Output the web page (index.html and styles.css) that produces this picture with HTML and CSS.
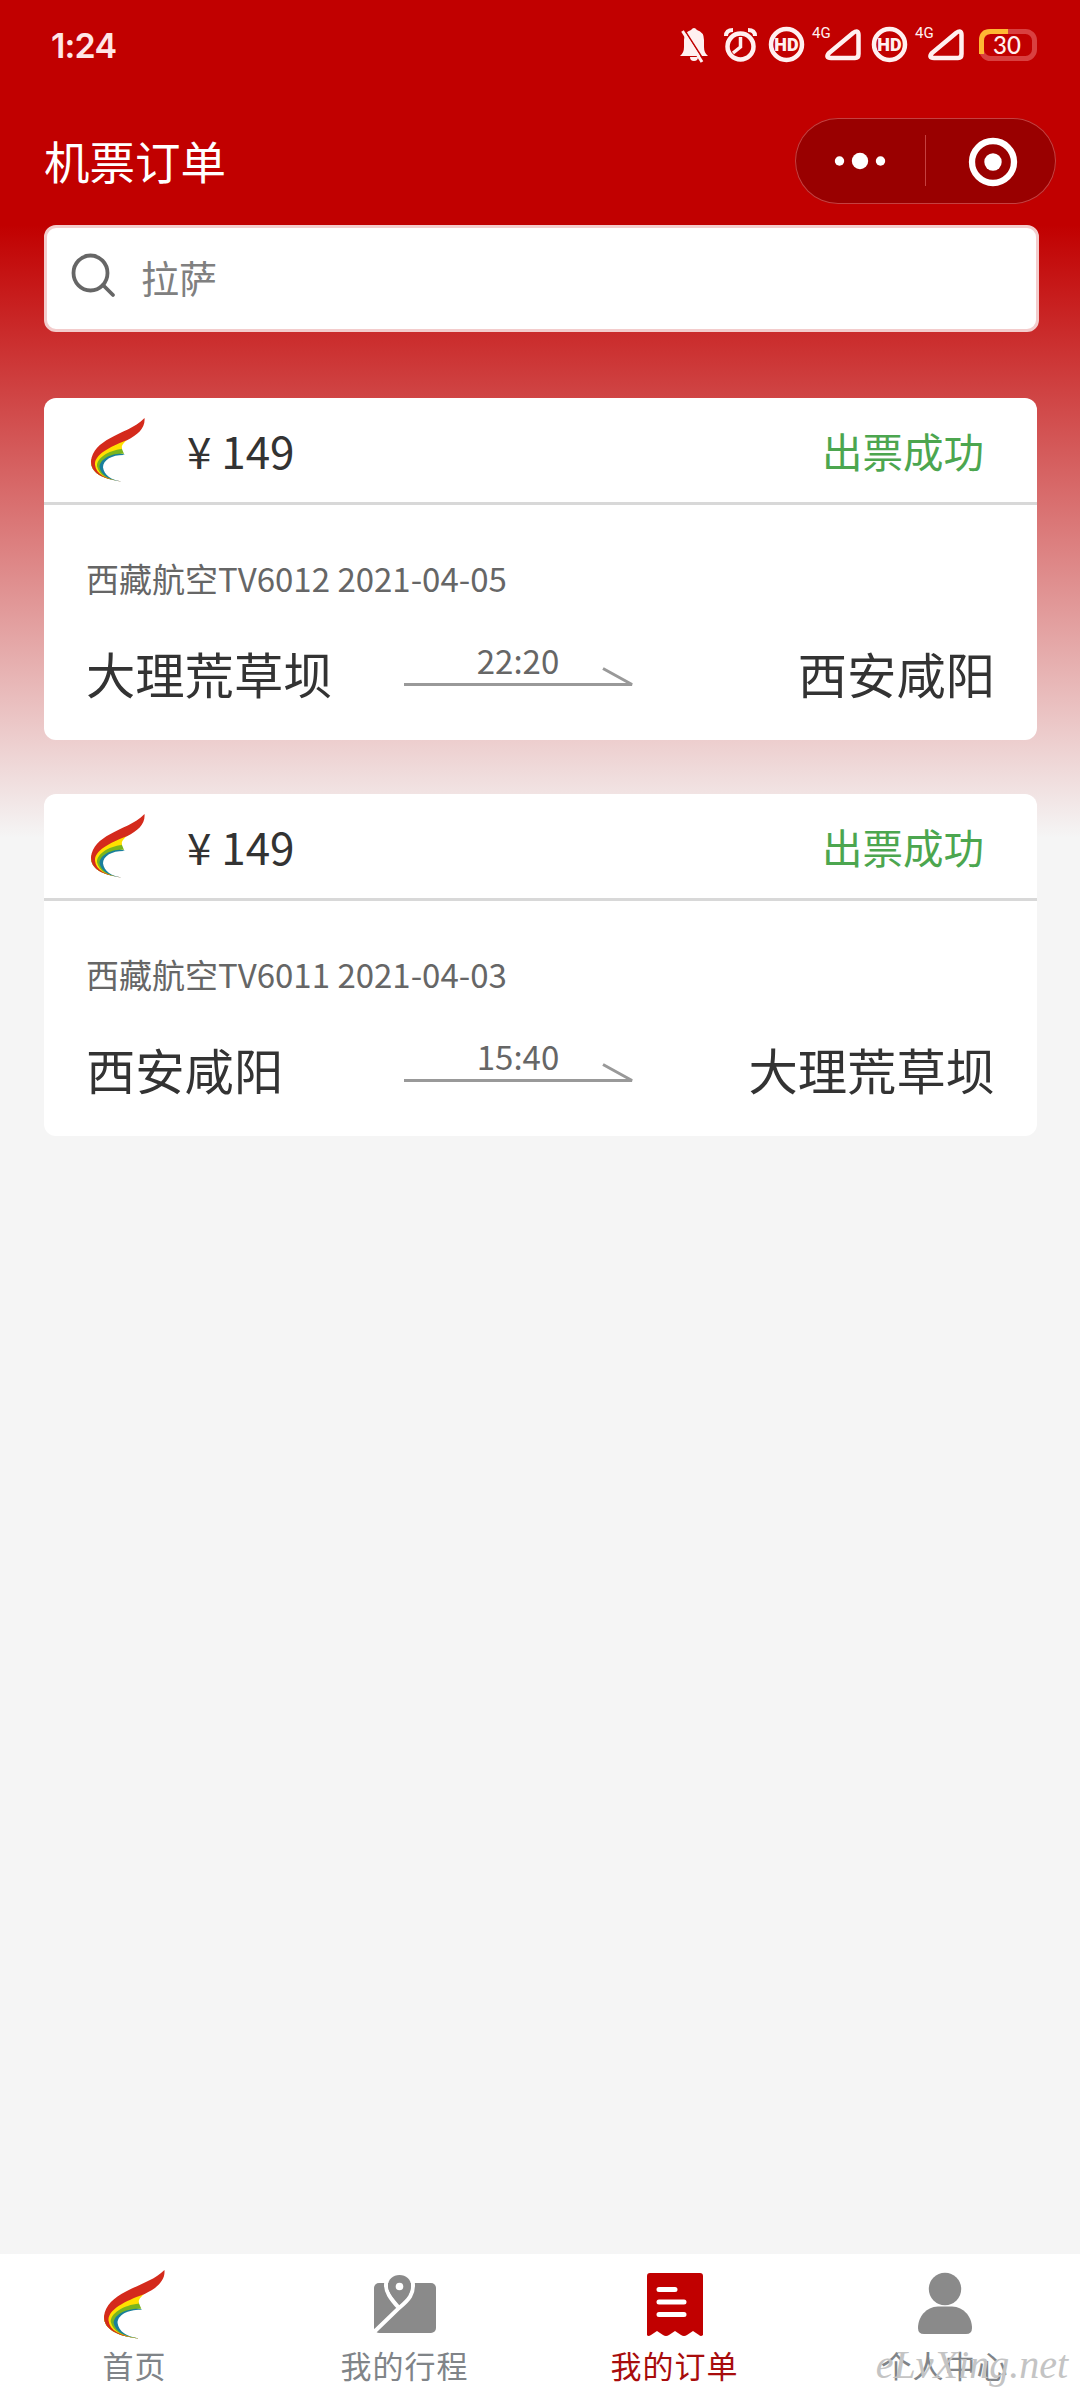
FILE: index.html
```html
<!DOCTYPE html>
<html lang="zh-CN">
<head>
  <meta charset="UTF-8">
  <meta name="viewport" content="width=device-width, initial-scale=1.0">
  <title>机票订单</title>
  <link rel="stylesheet" href="styles.css">
</head>
<body>
  <!-- shared airline logo -->
  <svg class="defs" width="0" height="0">
    <symbol id="logo" viewBox="0 0 54 65" preserveAspectRatio="none">
      <path fill="#187f9c" d="M34 37.500C22 37 12 42 12 50C13 58 20 63 31 64.500C10 62 0 55 0 44C3 38 20 31 34 37.500Z"/>
      <path fill="#7ab51d" d="M30 29L33 36.500C20 35.500 8.500 42 8.500 50C10 58 18 63 31 64.500C10 62 0 55 0 44C2 36 16 29 30 29Z"/>
      <path fill="#ffe000" d="M38 20C32 26 30 28 31 31.500C17 33 5.500 41 6 49C8 58 16 62.500 31 64.500C10 62 0 55 0 44C4 32 22 24 38 20Z"/>
      <path fill="#d42a1c" d="M53.500 0C54.500 10 47 17 36 22.500C24 27 3 36 4 47.500C5 57 14 62 31 64.500C10 62 0 55 0 44C1 33 9 26 19 20.500C30 14 44 10 53.500 0Z"/>
    </symbol>
  </svg>

  <div class="page">
    <header class="top">
      <div class="status-bar">
        <span class="clock">1:24</span>
        <svg class="status-icons" width="362" height="40" viewBox="0 0 362 40">
          <path d="M0 31Q4 28 4 22V15Q4 7 11 5Q14 1 17 5Q24 7 24 15V22Q24 28 28 31ZM10 32H18Q18 36 14 36Q10 36 10 32Z" fill="#fff0f0"/>
          <path d="M4.500 5L25 37" stroke="#c10000" stroke-width="1.500"/>
          <path d="M2.500 6L22 37" stroke="#fff0f0" stroke-width="3"/>
          <g fill="none" stroke="#fff0f0" stroke-width="4.500">
            <circle cx="60.500" cy="21.500" r="13"/>
            <path d="M60.500 12V22L53 28" stroke-width="3.500"/>
            <path d="M46 11Q46 5 53 5M68 5Q75 5 75 11" stroke-width="4"/>
            <circle cx="106.500" cy="19.500" r="15.500"/>
            <path d="M178.500 10Q178.500 4 173 8L149 28Q145 33 151 33H175Q178.500 33 178.500 29Z"/>
            <circle cx="209.500" cy="19.500" r="15.500"/>
            <path d="M281.500 10Q281.500 4 276 8L252 28Q248 33 254 33H278Q281.500 33 281.500 29Z"/>
          </g>
          <g class="hd"><text x="106.500" y="26">HD</text><text x="209.500" y="26">HD</text></g>
          <g class="net"><text x="132" y="13">4G</text><text x="235" y="13">4G</text></g>
          <rect x="301.500" y="6.500" width="53" height="27" rx="9" fill="none" stroke="#d94040" stroke-width="5"/>
          <path d="M328 6.500H310.500Q301.500 6.500 301.500 15.500V29" fill="none" stroke="#ffb833" stroke-width="5"/>
          <text class="battery" x="327" y="29">30</text>
        </svg>
      </div>
      <div class="nav-bar">
        <h1>机票订单</h1>
        <div class="capsule">
          <svg width="261" height="86" viewBox="0 0 261 86">
            <g fill="#fff">
              <circle cx="44.500" cy="43" r="4.700"/>
              <circle cx="65" cy="43" r="8.200"/>
              <circle cx="85.500" cy="43" r="4.700"/>
              <circle cx="198" cy="44" r="8.700"/>
            </g>
            <circle cx="198" cy="44" r="21" fill="none" stroke="#fff" stroke-width="6.300"/>
            <path d="M130.500 17V68" stroke="#c54040"/>
          </svg>
        </div>
      </div>
    </header>

    <main class="content">
      <div class="search">
        <svg width="46" height="46" viewBox="0 0 46 46" fill="none" stroke="#666" stroke-width="3.800" stroke-linecap="round">
          <ellipse cx="20.500" cy="20" rx="17" ry="17.500"/>
          <path d="M33 32L43 42"/>
        </svg>
        <span>拉萨</span>
      </div>

      <div class="card">
        <div class="card-head">
          <svg class="logo" width="54" height="64"><use href="#logo"/></svg>
          <span class="price">¥ 149</span>
          <span class="state">出票成功</span>
        </div>
        <div class="card-body">
          <div class="flight">西藏航空TV6012 2021-04-05</div>
          <div class="route">
            <span class="city">大理荒草坝</span>
            <div class="arrow">
              <span>22:20</span>
              <svg width="229" height="20" viewBox="0 0 229 20"><path d="M0 17.500H228L199 1.500" fill="none" stroke="#999" stroke-width="3" stroke-linejoin="bevel"/></svg>
            </div>
            <span class="city">西安咸阳</span>
          </div>
        </div>
      </div>

      <div class="card">
        <div class="card-head">
          <svg class="logo" width="54" height="64"><use href="#logo"/></svg>
          <span class="price">¥ 149</span>
          <span class="state">出票成功</span>
        </div>
        <div class="card-body">
          <div class="flight">西藏航空TV6011 2021-04-03</div>
          <div class="route">
            <span class="city">西安咸阳</span>
            <div class="arrow">
              <span>15:40</span>
              <svg width="229" height="20" viewBox="0 0 229 20"><path d="M0 17.500H228L199 1.500" fill="none" stroke="#999" stroke-width="3" stroke-linejoin="bevel"/></svg>
            </div>
            <span class="city">大理荒草坝</span>
          </div>
        </div>
      </div>
    </main>

    <nav class="tab-bar">
      <div class="tab">
        <svg width="61" height="69"><use href="#logo"/></svg>
        <span>首页</span>
      </div>
      <div class="tab">
        <svg width="62" height="69" viewBox="0 0 62 69">
          <rect y="13" width="62" height="50" rx="5" fill="#8a8a8a"/>
          <path d="M-1 63L25 38C16 28 12 22 12 15C12 7 18 2 25.500 2C33 2 39 7 39 15C39 24 36 29 25 38" fill="#8a8a8a" stroke="#fff" stroke-width="4"/>
          <rect x="8" width="35" height="13" fill="#fff"/>
          <path d="M25.500 34C18 27 14 21 14 16C14 9 19 5 25.500 5C32 5 37 9 37 16C37 22 33 27 25.500 34Z" fill="#8a8a8a"/>
          <circle cx="25.500" cy="16.500" r="3.800" fill="#fff"/>
        </svg>
        <span>我的行程</span>
      </div>
      <div class="tab active">
        <svg width="56" height="69" viewBox="0 0 56 69">
          <path d="M3 3H53Q56 3 56 6V65Q54 67 52 65L46 61L40 65Q37 67 34 65L28 61L22 65Q19 67 16 65L10 61L4 65Q1 67 0 65V6Q0 3 3 3Z" fill="#c10000"/>
          <path d="M12 19.500H28M12 32H37M12 44.500H37" stroke="#fff" stroke-width="5" stroke-linecap="round"/>
        </svg>
        <span>我的订单</span>
      </div>
      <div class="tab">
        <svg width="54" height="69" viewBox="0 0 54 69" fill="#8a8a8a">
          <circle cx="27" cy="19" r="16.200"/>
          <path d="M20 36.500H34C46 37 54 47 54 58Q54 64 48 64H6Q0 64 0 58C0 47 8 37 20 36.500Z"/>
        </svg>
        <span>个人中心</span>
      </div>
      <div class="watermark">eLvXing.net</div>
    </nav>
  </div>
</body>
</html>
```
FILE: styles.css
```css
* {
  box-sizing: border-box;
}
body {
  margin: 0;
  background: #f5f5f5;
  font-family: "Noto Sans CJK SC", sans-serif;
  color: #333;
}
svg {
  display: block;
  flex-shrink: 0;
}
.defs {
  position: absolute;
}
.page {
  width: 1080px;
  height: 2400px;
  display: flex;
  flex-direction: column;
  background: linear-gradient(to bottom, #c10000 225px, #f5f5f5 838px);
}
.top {
  height: 225px;
}
.status-bar {
  height: 90px;
  padding: 0 38px 0 51px;
  display: flex;
  justify-content: space-between;
  align-items: center;
}
.clock {
  font-family: Inter, sans-serif;
  font-size: 34px;
  font-weight: 600;
  letter-spacing: -0.8px;
  color: #ffe6e6;
}
.status-icons text {
  font-family: Roboto, sans-serif;
  fill: #fff0f0;
}
.hd {
  font-size: 18px;
  font-weight: 900;
  text-anchor: middle;
}
.net {
  font-size: 15px;
}
.status-icons .battery {
  font-family: Lato, sans-serif;
  font-size: 24px;
  font-weight: 500;
  text-anchor: middle;
}
.nav-bar {
  height: 142px;
  padding: 0 24px 0 44px;
  display: flex;
  justify-content: space-between;
  align-items: center;
}
h1 {
  margin: 0;
  padding-bottom: 3px;
  font-size: 45.5px;
  line-height: 60px;
  font-weight: 400;
  color: #fff;
}
.capsule {
  width: 261px;
  height: 86px;
  border-radius: 43px;
  background: #990000;
  box-shadow: inset 0 0 0 1px #c54040;
}
.content {
  flex: 1;
  padding: 0 43px 0 44px;
}
.search {
  width: 995px;
  height: 107px;
  padding: 0 0 5px 23px;
  margin-bottom: 66px;
  display: flex;
  align-items: center;
  gap: 25px;
  background: #fff;
  border: 3px solid #f3cccc;
  border-radius: 12px;
  font-size: 38px;
  color: #808080;
}
.card {
  height: 342px;
  margin-bottom: 54px;
  background: #fff;
  border-radius: 12px;
}
.card-head {
  height: 107px;
  padding: 0 53px 0 47px;
  display: flex;
  align-items: center;
  border-bottom: 3px solid #d8d8d8;
}
.price {
  margin-left: 42px;
  font-size: 44px;
}
.state {
  margin-left: auto;
  font-size: 40.5px;
  color: #4ca64f;
}
.card-body {
  padding: 49px 42px 0 42px;
}
.flight {
  font-size: 33px;
  line-height: 48px;
  color: #666;
}
.route {
  margin-top: 41px;
  display: grid;
  grid-template-columns: 318px 228px 1fr;
  height: 66px;
}
.city {
  font-size: 49.3px;
  line-height: 60px;
}
.city:last-child {
  text-align: right;
}
.arrow {
  display: flex;
  flex-direction: column;
  align-items: center;
  font-size: 33px;
  line-height: 34px;
  color: #666;
}
.arrow svg {
  margin-top: -10px;
}
.tab-bar {
  position: relative;
  height: 146px;
  padding-top: 16px;
  display: grid;
  grid-template-columns: repeat(4, 1fr);
  background: #fff;
}
.tab {
  padding-right: 1px;
  display: flex;
  flex-direction: column;
  align-items: center;
  font-size: 31px;
  line-height: 40px;
  letter-spacing: 1px;
  color: #808488;
}
.tab span {
  margin-top: 6px;
}
.tab.active {
  color: #a80c0c;
}
/* site mark lies over the last tab */
.watermark {
  position: absolute;
  right: 12px;
  bottom: 10px;
  font-family: "Liberation Serif", cursive;
  font-size: 40px;
  font-style: italic;
  line-height: 50px;
  color: #c4c4c4;
}
```
